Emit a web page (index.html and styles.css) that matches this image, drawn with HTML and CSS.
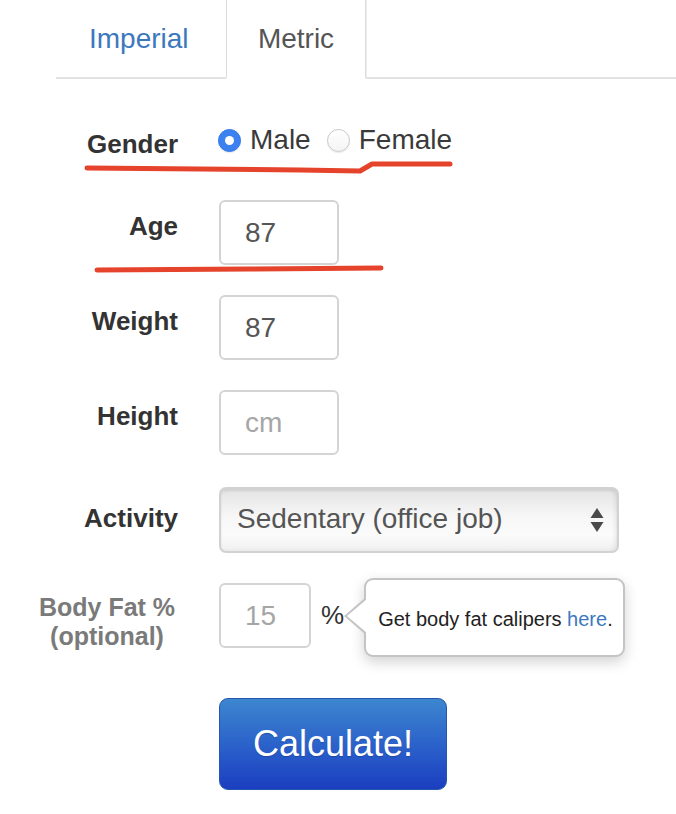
FILE: index.html
```html
<!DOCTYPE html>
<html>
<head>
<meta charset="utf-8">
<link rel="stylesheet" href="styles.css">
</head>
<body>
<div class="page">
  <nav class="tabs">
    <a class="tab tab-imperial">Imperial</a>
    <a class="tab tab-active">Metric</a>
    <span class="tab-fill"></span>
  </nav>

  <form class="form">
    <div class="row row-gender">
      <label class="lbl">Gender</label>
      <div class="radios">
        <span class="radio radio-on"></span><span class="radio-text">Male</span>
        <span class="radio"></span><span class="radio-text">Female</span>
      </div>
    </div>

    <div class="row">
      <label class="lbl">Age</label>
      <div class="field"><input class="input input-sm" type="text" value="87"></div>
    </div>

    <div class="row">
      <label class="lbl">Weight</label>
      <div class="field"><input class="input input-sm" type="text" value="87"></div>
    </div>

    <div class="row row-height">
      <label class="lbl">Height</label>
      <div class="field"><input class="input input-sm" type="text" placeholder="cm"></div>
    </div>

    <div class="row">
      <label class="lbl lbl-activity">Activity</label>
      <div class="field">
        <div class="select">
          <span class="select-text">Sedentary (office job)</span>
          <svg class="select-arrows" width="14" height="24" viewBox="0 0 14 24"><path d="M7 0 L13.5 10 L0.5 10 Z M0.5 14 L13.5 14 L7 24 Z" fill="#4a4a4a"/></svg>
        </div>
      </div>
    </div>

    <div class="row row-fat">
      <label class="lbl lbl-fat">Body Fat %<br>(optional)</label>
      <div class="field field-fat">
        <input class="input input-xs" type="text" placeholder="15">
        <span class="pct">%</span>
        <div class="popover"><span>Get body fat calipers <a class="link">here</a>.</span></div>
      </div>
    </div>

    <div class="row row-btn">
      <span></span>
      <div class="field"><button class="btn" type="button">Calculate!</button></div>
    </div>
  </form>

  <svg class="annot" width="676" height="814" viewBox="0 0 676 814">
    <path d="M87 168 L300 170 L360 171 L372 164 L450 164" fill="none" stroke="#e5432b" stroke-width="5" stroke-linecap="round" stroke-linejoin="round"/>
    <path d="M97 270 L250 269 L381 268" fill="none" stroke="#e5432b" stroke-width="5" stroke-linecap="round"/>
  </svg>
</div>
</body>
</html>
```

FILE: styles.css
```css
* { box-sizing: border-box; }
html, body { margin: 0; padding: 0; background: #fff; }
body {
  font-family: "Liberation Sans", Arial, Helvetica, sans-serif;
  color: #333;
  width: 676px;
  height: 814px;
  overflow: hidden;
}
.page { position: relative; width: 676px; height: 814px; }

/* tabs */
.tabs {
  display: flex;
  margin-left: 56px;
  height: 79px;
}
.tab {
  display: block;
  height: 79px;
  line-height: 78px;
  font-size: 28px;
  text-align: center;
  border-bottom: 2px solid #e2e2e2;
}
.tab-imperial {
  width: 170px;
  color: #3c78bd;
  text-align: left;
  padding-left: 33px;
}
.tab-active {
  width: 140px;
  color: #555;
  border: 1px solid #dcdcdc;
  border-top: 0;
  border-bottom: 2px solid #fff;
  box-shadow: 1px 0 0 #eee;
}
.tab-fill { flex: 1; border-bottom: 2px solid #e2e2e2; }

/* form */
.form { padding-top: 39px; }
.row {
  display: grid;
  grid-template-columns: 178px 1fr;
  column-gap: 41px;
  margin-bottom: 30px;
}
.row-height { margin-bottom: 32px; }
.lbl {
  text-align: right;
  font-size: 26px;
  font-weight: bold;
  line-height: 30px;
  padding-top: 11px;
  color: #333;
}
.lbl-activity { padding-top: 16px; }

.row-gender { height: 44px; margin-bottom: 38px; }
.radios {
  display: flex;
  align-items: center;
  height: 44px;
  font-size: 28px;
  color: #3a3a3a;
}
.radio {
  width: 23px;
  height: 23px;
  border-radius: 50%;
  border: 1px solid #c8c8c8;
  background: linear-gradient(#fff, #f4f4f4);
  box-shadow: 0 1px 1px rgba(0,0,0,0.08);
  margin-left: -1px;
  position: relative;
  flex: none;
}
.radio-on {
  background: #3b82f0;
  border-color: #3479e8;
}
.radio-on::after {
  content: "";
  position: absolute;
  left: 6px; top: 6px;
  width: 9px; height: 9px;
  border-radius: 50%;
  background: #fff;
}
.radio-text { margin-left: 9px; margin-right: 17px; line-height: 44px; }

.field { display: flex; align-items: center; }
.input {
  height: 65px;
  border: 2px solid #d4d4d4;
  border-radius: 6px;
  font-family: "Liberation Sans", Arial, sans-serif;
  font-size: 28px;
  color: #555;
  padding: 0 0 0 24px;
  background: #fff;
  outline: none;
}
.input::placeholder { color: #a6a6a6; }
.input-sm { width: 120px; }
.input-xs { width: 92px; }

.select {
  width: 400px;
  height: 66px;
  border: 2px solid #d2d2d2;
  border-radius: 7px;
  background: linear-gradient(#e4e4e4 0%, #f7f7f7 45%, #fbfbfb 75%, #efefef 100%);
  box-shadow: inset 0 2px 3px rgba(0,0,0,0.08), inset -3px 0 4px rgba(0,0,0,0.05);
  display: flex;
  align-items: center;
  justify-content: space-between;
  padding: 0 13px 0 16px;
}
.select-text { font-size: 28px; color: #555; position: relative; top: -1px; }
.select-arrows { display: block; }

.row-fat { margin-bottom: 47px; }
.field-fat { height: 65px; }
.lbl-fat {
  color: #7a7a7a;
  text-align: center;
  font-size: 25px;
  line-height: 29px;
  padding-top: 10px;
  padding-left: 36px;
}
.pct { font-size: 26px; color: #333; margin-left: 10px; }
.popover {
  position: relative;
  margin: -5px 0 -9px 20px;
  width: 261px;
  height: 79px;
  flex: none;
  border: 2px solid #c4c4c4;
  border-radius: 9px;
  background: #fff;
  box-shadow: 0 5px 14px rgba(0,0,0,0.18);
  font-size: 20px;
  color: #222;
  display: flex;
  align-items: center;
  padding-left: 12px;
  padding-top: 4px;
}
.popover::before {
  content: "";
  position: absolute;
  left: -22px;
  top: 17px;
  border-style: solid;
  border-width: 19px 22px 19px 0;
  border-color: transparent #c4c4c4 transparent transparent;
}
.popover::after {
  content: "";
  position: absolute;
  left: -19px;
  top: 19px;
  border-style: solid;
  border-width: 17px 20px 17px 0;
  border-color: transparent #fff transparent transparent;
}
.link { color: #3b78c0; }

.btn {
  width: 228px;
  height: 92px;
  border: 1px solid #2556b0;
  border-radius: 9px;
  background: linear-gradient(#3c86cf, #2a5fca 55%, #1b3ec0);
  color: #fff;
  font-family: "Liberation Sans", Arial, sans-serif;
  font-size: 36px;
  text-shadow: 0 1px 1px rgba(0,0,0,0.2);
  padding: 0;
}

.annot { position: absolute; left: 0; top: 0; pointer-events: none; }
```
